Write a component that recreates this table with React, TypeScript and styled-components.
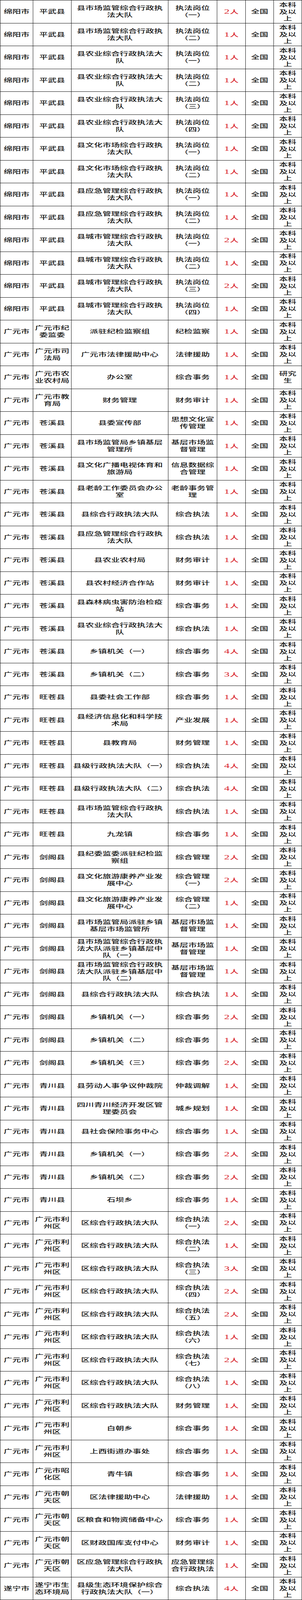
import React from 'react';
import styled, { createGlobalStyle } from 'styled-components';

type Row = [string, string, string, string, number, string?];

const MY = '绵阳市';
const GY = '广元市';
const PW = '平武县';
const CX = '苍溪县';
const WC = '旺苍县';
const JG = '剑阁县';
const QC = '青川县';
const LZ = '广元市利州区';
const CT = '广元市朝天区';
const LZ_TEAM = '区综合行政执法大队';
const JG_MID = '县市场监管综合行政执法大队派驻乡镇基层中队';

const rows: Row[] = [
  [MY, PW, '县市场监管综合行政执法大队', '执法岗位（一）', 2],
  [MY, PW, '县市场监管综合行政执法大队', '执法岗位（二）', 1],
  [MY, PW, '县农业综合行政执法大队', '执法岗位（一）', 1],
  [MY, PW, '县农业综合行政执法大队', '执法岗位（二）', 1],
  [MY, PW, '县农业综合行政执法大队', '执法岗位（三）', 1],
  [MY, PW, '县农业综合行政执法大队', '执法岗位（四）', 1],
  [MY, PW, '县文化市场综合行政执法大队', '执法岗位（一）', 1],
  [MY, PW, '县文化市场综合行政执法大队', '执法岗位（二）', 1],
  [MY, PW, '县应急管理综合行政执法大队', '执法岗位（一）', 1],
  [MY, PW, '县应急管理综合行政执法大队', '执法岗位（二）', 1],
  [MY, PW, '县城市管理综合行政执法大队', '执法岗位（一）', 2],
  [MY, PW, '县城市管理综合行政执法大队', '执法岗位（二）', 1],
  [MY, PW, '县城市管理综合行政执法大队', '执法岗位（三）', 2],
  [MY, PW, '县城市管理综合行政执法大队', '执法岗位（四）', 1],
  [GY, '广元市纪委监委', '派驻纪检监察组', '纪检监察', 1],
  [GY, '广元市司法局', '广元市法律援助中心', '法律援助', 1],
  [GY, '广元市农业农村局', '办公室', '综合事务', 1, '研究生'],
  [GY, '广元市教育局', '财务管理', '财务审计', 1],
  [GY, CX, '县委宣传部', '思想文化宣传管理', 1],
  [GY, CX, '县市场监管局乡镇基层管理所', '基层市场监督管理', 1],
  [GY, CX, '县文化广播电视体育和旅游局', '信息数据综合管理', 1],
  [GY, CX, '县老龄工作委员会办公室', '老龄事务管理', 1],
  [GY, CX, '县综合行政执法大队', '综合执法', 1],
  [GY, CX, '县应急管理综合行政执法大队', '综合执法', 1],
  [GY, CX, '县农业农村局', '财务审计', 1],
  [GY, CX, '县农村经济合作站', '财务审计', 1],
  [GY, CX, '县森林病虫害防治检疫站', '综合事务', 1],
  [GY, CX, '县农业综合行政执法大队', '综合执法', 1],
  [GY, CX, '乡镇机关（一）', '综合事务', 4],
  [GY, CX, '乡镇机关（二）', '综合事务', 3],
  [GY, WC, '县委社会工作部', '综合事务', 1],
  [GY, WC, '县经济信息化和科学技术局', '产业发展', 1],
  [GY, WC, '县教育局', '财务管理', 1],
  [GY, WC, '县级行政执法大队（一）', '综合执法', 4],
  [GY, WC, '县级行政执法大队（二）', '综合执法', 4],
  [GY, WC, '县市场监管综合行政执法大队', '综合执法', 1],
  [GY, WC, '九龙镇', '综合事务', 1],
  [GY, JG, '县纪委监委派驻纪检监察组', '综合管理', 2],
  [GY, JG, '县文化旅游康养产业发展中心', '综合管理（一）', 2],
  [GY, JG, '县文化旅游康养产业发展中心', '综合管理（二）', 1],
  [GY, JG, '县市场监管局派驻乡镇基层市场监管所', '基层市场监督管理', 1],
  [GY, JG, JG_MID + '（一）', '基层市场监督管理', 1],
  [GY, JG, JG_MID + '（二）', '基层市场监督管理', 1],
  [GY, JG, '县综合行政执法大队', '综合执法', 1],
  [GY, JG, '乡镇机关（一）', '综合事务', 2],
  [GY, JG, '乡镇机关（二）', '综合事务', 1],
  [GY, JG, '乡镇机关（三）', '综合事务', 2],
  [GY, QC, '县劳动人事争议仲裁院', '仲裁调解', 1],
  [GY, QC, '四川青川经济开发区管理委员会', '城乡规划', 1],
  [GY, QC, '县社会保险事务中心', '综合事务', 1],
  [GY, QC, '乡镇机关（一）', '综合事务', 2],
  [GY, QC, '乡镇机关（二）', '综合事务', 2],
  [GY, QC, '石坝乡', '综合事务', 1],
  [GY, LZ, LZ_TEAM, '综合执法（一）', 2],
  [GY, LZ, LZ_TEAM, '综合执法（二）', 1],
  [GY, LZ, LZ_TEAM, '综合执法（三）', 3],
  [GY, LZ, LZ_TEAM, '综合执法（四）', 2],
  [GY, LZ, LZ_TEAM, '综合执法（五）', 2],
  [GY, LZ, LZ_TEAM, '综合执法（六）', 1],
  [GY, LZ, LZ_TEAM, '综合执法（七）', 2],
  [GY, LZ, LZ_TEAM, '综合执法（八）', 1],
  [GY, LZ, LZ_TEAM, '财务管理', 1],
  [GY, LZ, '白朝乡', '综合事务', 1],
  [GY, LZ, '上西街道办事处', '综合事务', 1],
  [GY, '广元市昭化区', '青牛镇', '综合事务', 1],
  [GY, CT, '区法律援助中心', '法律援助', 1],
  [GY, CT, '区粮食和物资储备中心', '综合事务', 1],
  [GY, CT, '区财政国库支付中心', '财务审计', 1],
  [GY, CT, '区应急管理综合行政执法大队', '应急管理综合行政执法', 1],
  ['遂宁市', '遂宁市生态环境局', '县级生态环境保护综合行政执法大队（一）', '综合执法', 4],
];

const GlobalStyle = createGlobalStyle`
  html, body {
    margin: 0;
    padding: 0;
    background: #ffffff;
  }
  body {
    overflow: hidden;
  }
`;

// the sheet fills the whole viewport height, one equal track per row
const Sheet = styled.div<{ $rows: number }>`
  display: grid;
  grid-template-columns: 84px 98px 248px 125px 73px 72px 72px;
  grid-template-rows: repeat(${props => props.$rows}, 1fr);
  width: 773px;
  height: 100vh;
  box-sizing: border-box;
  border-left: 1px solid #111;
  border-top: 1px solid #111;
  font-family: 'Liberation Serif', 'Noto Sans CJK SC', serif;
  font-size: 22px;
  font-weight: 500;
  color: #111;
`;

const Cell = styled.div<{ $red?: boolean }>`
  display: flex;
  align-items: center;
  justify-content: center;
  min-height: 0;
  box-sizing: border-box;
  padding: 0 4px;
  border-right: 1px solid #111;
  border-bottom: 1px solid #111;
  text-align: center;
  color: ${props => (props.$red ? '#d8232b' : 'inherit')};
`;

// glyphs in the sheet are squat: keep the width, flatten the height
const Text = styled.span`
  display: block;
  line-height: 29.5px;
  transform: scaleY(0.6);
  transform-origin: center;
`;

const Num = styled.span`
  font-size: 28px;
  font-weight: 400;
  margin-right: 1px;
`;

const App = () => {
  return (
    <>
      <GlobalStyle />
      <Sheet $rows={rows.length}>
        {rows.map(([city, county, dept, post, count, edu], i) => (
          <React.Fragment key={i}>
            <Cell><Text>{city}</Text></Cell>
            <Cell><Text>{county}</Text></Cell>
            <Cell><Text>{dept}</Text></Cell>
            <Cell><Text>{post}</Text></Cell>
            <Cell $red>
              <Text><Num>{count}</Num>人</Text>
            </Cell>
            <Cell><Text>全国</Text></Cell>
            <Cell><Text>{edu || '本科及以上'}</Text></Cell>
          </React.Fragment>
        ))}
      </Sheet>
    </>
  );
};

export default App;
